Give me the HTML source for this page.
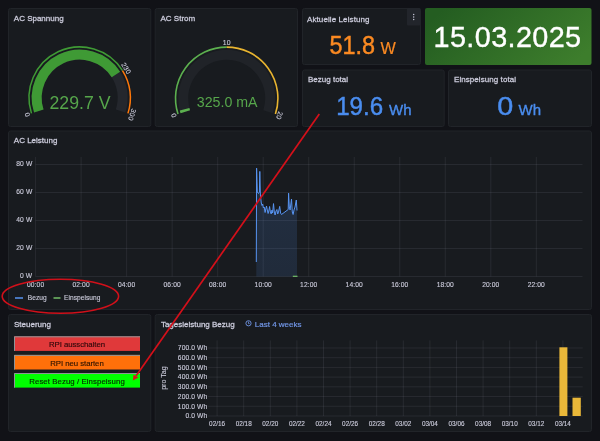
<!DOCTYPE html>
<html><head><meta charset="utf-8"><style>
html,body{margin:0;padding:0;background:#111217;width:600px;height:441px;overflow:hidden}
svg{display:block;font-family:"Liberation Sans", sans-serif;will-change:transform}
</style></head><body>
<svg width="600" height="441" viewBox="0 0 600 441">
<rect x="8.5" y="8.5" width="142.3" height="118" rx="2" fill="#181b1f" stroke="#212429" stroke-width="1"/>
<rect x="155.2" y="8.5" width="142.3" height="118" rx="2" fill="#181b1f" stroke="#212429" stroke-width="1"/>
<rect x="302.5" y="8.5" width="118" height="56" rx="2" fill="#181b1f" stroke="#212429" stroke-width="1"/>
<rect x="302.5" y="70.0" width="141.7" height="56.5" rx="2" fill="#181b1f" stroke="#212429" stroke-width="1"/>
<rect x="448.5" y="70.0" width="143" height="56.5" rx="2" fill="#181b1f" stroke="#212429" stroke-width="1"/>
<rect x="8.5" y="131.0" width="583" height="178.5" rx="2" fill="#181b1f" stroke="#212429" stroke-width="1"/>
<rect x="8.5" y="314.5" width="142.3" height="117" rx="2" fill="#181b1f" stroke="#212429" stroke-width="1"/>
<rect x="155.2" y="314.5" width="436.3" height="117" rx="2" fill="#181b1f" stroke="#212429" stroke-width="1"/>
<defs><linearGradient id="gg" x1="0" y1="0.3" x2="1" y2="0.7"><stop offset="0" stop-color="#245d21"/><stop offset="1" stop-color="#3d7d2c"/></linearGradient><linearGradient id="bf" x1="0" y1="0" x2="0" y2="1"><stop offset="0" stop-color="#5794F2" stop-opacity="0.17"/><stop offset="1" stop-color="#5794F2" stop-opacity="0.13"/></linearGradient></defs>
<rect x="425" y="8" width="166.5" height="57" rx="2" fill="url(#gg)"/>
<text x="13.8" y="21" font-size="8" fill="#ccccdc" text-anchor="start" stroke="#ccccdc" stroke-width="0.28">AC Spannung</text>
<text x="160.5" y="21" font-size="8" fill="#ccccdc" text-anchor="start" stroke="#ccccdc" stroke-width="0.28">AC Strom</text>
<text x="307" y="21.5" font-size="8" fill="#ccccdc" text-anchor="start" stroke="#ccccdc" stroke-width="0.28" textLength="62.5" lengthAdjust="spacing">Aktuelle Leistung</text>
<text x="308" y="82" font-size="8" fill="#ccccdc" text-anchor="start" stroke="#ccccdc" stroke-width="0.28">Bezug total</text>
<text x="454" y="82" font-size="8" fill="#ccccdc" text-anchor="start" stroke="#ccccdc" stroke-width="0.28" textLength="62" lengthAdjust="spacing">Einspeisung total</text>
<text x="13.8" y="143.3" font-size="8" fill="#ccccdc" text-anchor="start" stroke="#ccccdc" stroke-width="0.28">AC Leistung</text>
<text x="14" y="326.5" font-size="8" fill="#ccccdc" text-anchor="start" stroke="#ccccdc" stroke-width="0.28">Steuerung</text>
<text x="160.9" y="326.8" font-size="8" fill="#ccccdc" text-anchor="start" stroke="#ccccdc" stroke-width="0.28">Tagesleistung Bezug</text>
<rect x="407" y="8" width="13.5" height="17.5" rx="1" fill="#22252b"/>
<circle cx="413.7" cy="14.5" r="0.7" fill="#ccccdc"/>
<circle cx="413.7" cy="17" r="0.7" fill="#ccccdc"/>
<circle cx="413.7" cy="19.5" r="0.7" fill="#ccccdc"/>
<text x="329.4" y="54.4" font-size="25" fill="#FB8A22" text-anchor="start" textLength="45.6" lengthAdjust="spacingAndGlyphs" stroke="#FB8A22" stroke-width="0.45">51.8</text>
<text x="380.6" y="54.4" font-size="16.2" fill="#FB8A22" text-anchor="start" stroke="#FB8A22" stroke-width="0.2">W</text>
<text x="433.6" y="47.1" font-size="28.8" fill="#ffffff" text-anchor="start" textLength="147.5" lengthAdjust="spacing" stroke="#ffffff" stroke-width="0.35">15.03.2025</text>
<text x="336.2" y="115.4" font-size="25" fill="#4A8DEF" text-anchor="start" stroke="#4A8DEF" stroke-width="0.45" textLength="47" lengthAdjust="spacingAndGlyphs">19.6</text>
<text x="389" y="115.4" font-size="15" fill="#4A8DEF" text-anchor="start" stroke="#4A8DEF" stroke-width="0.35">Wh</text>
<text x="497.3" y="115" font-size="25" fill="#4A8DEF" text-anchor="start" textLength="16" lengthAdjust="spacingAndGlyphs" stroke="#4A8DEF" stroke-width="0.45">0</text>
<text x="518.5" y="115" font-size="15" fill="#4A8DEF" text-anchor="start" stroke="#4A8DEF" stroke-width="0.35">Wh</text>
<path d="M38.80,110.99 A43,43 0 1 1 120.60,110.99" fill="none" stroke="#24272d" stroke-width="10" stroke-linecap="butt"/>
<path d="M38.80,110.99 A43,43 0 0 1 115.92,74.52" fill="none" stroke="#3f9a35" stroke-width="10" stroke-linecap="butt"/>
<path d="M31.48,113.37 A50.7,50.7 0 0 1 122.51,70.53" fill="none" stroke="#3f9a35" stroke-width="1.5" stroke-linecap="butt"/>
<path d="M122.51,70.53 A50.7,50.7 0 0 1 127.92,113.37" fill="none" stroke="#FF780A" stroke-width="1.5" stroke-linecap="butt"/>
<text x="0" y="2.4" font-size="6.9" fill="#ccccdc" letter-spacing="0.15" stroke="#ccccdc" stroke-width="0.1" text-anchor="middle" transform="translate(27.30,114.73) rotate(252.0)">0</text>
<text x="0" y="2.4" font-size="6.9" fill="#ccccdc" letter-spacing="0.15" stroke="#ccccdc" stroke-width="0.1" text-anchor="middle" transform="translate(126.22,68.18) rotate(417.6)">230</text>
<text x="0" y="2.4" font-size="6.9" fill="#ccccdc" letter-spacing="0.15" stroke="#ccccdc" stroke-width="0.1" text-anchor="middle" transform="translate(132.10,114.73) rotate(468.0)">300</text>
<text x="80" y="109.4" font-size="17.7" fill="#56A64B" text-anchor="middle" >229.7 V</text>
<path d="M185.33,111.74 A43.5,43.5 0 1 1 268.07,111.74" fill="none" stroke="#202328" stroke-width="10" stroke-linecap="butt"/>
<path d="M185.33,111.74 A43.5,43.5 0 0 1 184.58,109.18" fill="none" stroke="#5cb04f" stroke-width="10" stroke-linecap="butt"/>
<path d="M178.01,114.12 A51.2,51.2 0 0 1 226.70,47.10" fill="none" stroke="#5cb04f" stroke-width="1.6" stroke-linecap="butt"/>
<path d="M226.70,47.10 A51.2,51.2 0 0 1 275.39,114.12" fill="none" stroke="#E8B430" stroke-width="1.6" stroke-linecap="butt"/>
<text x="0" y="2.4" font-size="6.9" fill="#ccccdc" letter-spacing="0.15" stroke="#ccccdc" stroke-width="0.1" text-anchor="middle" transform="translate(173.82,115.48) rotate(252.0)">0</text>
<text x="0" y="2.4" font-size="6.9" fill="#ccccdc" letter-spacing="0.15" stroke="#ccccdc" stroke-width="0.1" text-anchor="middle" transform="translate(226.70,42.70) rotate(360.0)">10</text>
<text x="0" y="2.4" font-size="6.9" fill="#ccccdc" letter-spacing="0.15" stroke="#ccccdc" stroke-width="0.1" text-anchor="middle" transform="translate(279.58,115.48) rotate(468.0)">20</text>
<text x="227.2" y="106.9" font-size="14.2" fill="#56A64B" text-anchor="middle" >325.0 mA</text>
<line x1="35.5" y1="164.5" x2="582.5" y2="164.5" stroke="#ccccdc" stroke-opacity="0.09" stroke-width="1"/>
<text x="32.3" y="166.4" font-size="6.7" fill="#ccccdc" text-anchor="end" letter-spacing="0.1" stroke="#ccccdc" stroke-width="0.12">80 W</text>
<line x1="35.5" y1="192.5" x2="582.5" y2="192.5" stroke="#ccccdc" stroke-opacity="0.09" stroke-width="1"/>
<text x="32.3" y="194.4" font-size="6.7" fill="#ccccdc" text-anchor="end" letter-spacing="0.1" stroke="#ccccdc" stroke-width="0.12">60 W</text>
<line x1="35.5" y1="220.5" x2="582.5" y2="220.5" stroke="#ccccdc" stroke-opacity="0.09" stroke-width="1"/>
<text x="32.3" y="222.4" font-size="6.7" fill="#ccccdc" text-anchor="end" letter-spacing="0.1" stroke="#ccccdc" stroke-width="0.12">40 W</text>
<line x1="35.5" y1="248.5" x2="582.5" y2="248.5" stroke="#ccccdc" stroke-opacity="0.09" stroke-width="1"/>
<text x="32.3" y="250.4" font-size="6.7" fill="#ccccdc" text-anchor="end" letter-spacing="0.1" stroke="#ccccdc" stroke-width="0.12">20 W</text>
<line x1="35.5" y1="276.5" x2="582.5" y2="276.5" stroke="#ccccdc" stroke-opacity="0.09" stroke-width="1"/>
<text x="32.3" y="278.4" font-size="6.7" fill="#ccccdc" text-anchor="end" letter-spacing="0.1" stroke="#ccccdc" stroke-width="0.12">0 W</text>
<line x1="35.60" y1="157" x2="35.60" y2="276.5" stroke="#ccccdc" stroke-opacity="0.09" stroke-width="1"/>
<text x="35.60" y="286.8" font-size="6.7" fill="#ccccdc" text-anchor="middle" letter-spacing="0.1" stroke="#ccccdc" stroke-width="0.12">00:00</text>
<line x1="81.12" y1="157" x2="81.12" y2="276.5" stroke="#ccccdc" stroke-opacity="0.09" stroke-width="1"/>
<text x="81.12" y="286.8" font-size="6.7" fill="#ccccdc" text-anchor="middle" letter-spacing="0.1" stroke="#ccccdc" stroke-width="0.12">02:00</text>
<line x1="126.64" y1="157" x2="126.64" y2="276.5" stroke="#ccccdc" stroke-opacity="0.09" stroke-width="1"/>
<text x="126.64" y="286.8" font-size="6.7" fill="#ccccdc" text-anchor="middle" letter-spacing="0.1" stroke="#ccccdc" stroke-width="0.12">04:00</text>
<line x1="172.16" y1="157" x2="172.16" y2="276.5" stroke="#ccccdc" stroke-opacity="0.09" stroke-width="1"/>
<text x="172.16" y="286.8" font-size="6.7" fill="#ccccdc" text-anchor="middle" letter-spacing="0.1" stroke="#ccccdc" stroke-width="0.12">06:00</text>
<line x1="217.68" y1="157" x2="217.68" y2="276.5" stroke="#ccccdc" stroke-opacity="0.09" stroke-width="1"/>
<text x="217.68" y="286.8" font-size="6.7" fill="#ccccdc" text-anchor="middle" letter-spacing="0.1" stroke="#ccccdc" stroke-width="0.12">08:00</text>
<line x1="263.20" y1="157" x2="263.20" y2="276.5" stroke="#ccccdc" stroke-opacity="0.09" stroke-width="1"/>
<text x="263.20" y="286.8" font-size="6.7" fill="#ccccdc" text-anchor="middle" letter-spacing="0.1" stroke="#ccccdc" stroke-width="0.12">10:00</text>
<line x1="308.72" y1="157" x2="308.72" y2="276.5" stroke="#ccccdc" stroke-opacity="0.09" stroke-width="1"/>
<text x="308.72" y="286.8" font-size="6.7" fill="#ccccdc" text-anchor="middle" letter-spacing="0.1" stroke="#ccccdc" stroke-width="0.12">12:00</text>
<line x1="354.24" y1="157" x2="354.24" y2="276.5" stroke="#ccccdc" stroke-opacity="0.09" stroke-width="1"/>
<text x="354.24" y="286.8" font-size="6.7" fill="#ccccdc" text-anchor="middle" letter-spacing="0.1" stroke="#ccccdc" stroke-width="0.12">14:00</text>
<line x1="399.76" y1="157" x2="399.76" y2="276.5" stroke="#ccccdc" stroke-opacity="0.09" stroke-width="1"/>
<text x="399.76" y="286.8" font-size="6.7" fill="#ccccdc" text-anchor="middle" letter-spacing="0.1" stroke="#ccccdc" stroke-width="0.12">16:00</text>
<line x1="445.28" y1="157" x2="445.28" y2="276.5" stroke="#ccccdc" stroke-opacity="0.09" stroke-width="1"/>
<text x="445.28" y="286.8" font-size="6.7" fill="#ccccdc" text-anchor="middle" letter-spacing="0.1" stroke="#ccccdc" stroke-width="0.12">18:00</text>
<line x1="490.80" y1="157" x2="490.80" y2="276.5" stroke="#ccccdc" stroke-opacity="0.09" stroke-width="1"/>
<text x="490.80" y="286.8" font-size="6.7" fill="#ccccdc" text-anchor="middle" letter-spacing="0.1" stroke="#ccccdc" stroke-width="0.12">20:00</text>
<line x1="536.32" y1="157" x2="536.32" y2="276.5" stroke="#ccccdc" stroke-opacity="0.09" stroke-width="1"/>
<text x="536.32" y="286.8" font-size="6.7" fill="#ccccdc" text-anchor="middle" letter-spacing="0.1" stroke="#ccccdc" stroke-width="0.12">22:00</text>
<polygon points="256.3,276.5 256.3,262 256.6,168.2 257.3,192 258.5,193.5 259.4,192 259.8,171.4 260.4,195 261.3,203 262,205.5 262.7,204 263.4,208 264.2,207 265.1,212.5 265.8,209 266.5,206 267.3,210 268.1,213.5 268.8,211 269.6,206.5 270.4,212 271.2,214 272,210 272.6,213 273.5,203.6 274.3,212 275.1,215 276,211 276.9,209.5 277.7,214 278.5,212 279.7,206.4 280.6,213 281.5,214.5 288.2,209.5 288.6,193.2 289.3,207 290.1,210 291.5,199 292.3,212 293.1,214.5 294,210 295,207 296.3,200 297,210.5 297,276.5" fill="url(#bf)"/>
<polyline points="256.3,262 256.6,168.2 257.3,192 258.5,193.5 259.4,192 259.8,171.4 260.4,195 261.3,203 262,205.5 262.7,204 263.4,208 264.2,207 265.1,212.5 265.8,209 266.5,206 267.3,210 268.1,213.5 268.8,211 269.6,206.5 270.4,212 271.2,214 272,210 272.6,213 273.5,203.6 274.3,212 275.1,215 276,211 276.9,209.5 277.7,214 278.5,212 279.7,206.4 280.6,213 281.5,214.5 288.2,209.5 288.6,193.2 289.3,207 290.1,210 291.5,199 292.3,212 293.1,214.5 294,210 295,207 296.3,200 297,210.5" fill="none" stroke="#5794F2" stroke-width="1" stroke-linejoin="miter" stroke-miterlimit="2"/>
<line x1="292.8" y1="276.3" x2="297.5" y2="276.3" stroke="#73BF69" stroke-width="1.2"/>
<line x1="15" y1="298" x2="23" y2="298" stroke="#5794F2" stroke-width="1.5"/>
<text x="27.8" y="299.8" font-size="6.6" fill="#ccccdc" text-anchor="start" letter-spacing="0.05" stroke="#ccccdc" stroke-width="0.12">Bezug</text>
<line x1="53.5" y1="298" x2="60.5" y2="298" stroke="#73BF69" stroke-width="1.5"/>
<text x="64" y="299.8" font-size="6.6" fill="#ccccdc" text-anchor="start" letter-spacing="0.05" stroke="#ccccdc" stroke-width="0.12">Einspeisung</text>
<rect x="14" y="336.3" width="126" height="14.6" fill="#E0393A"/>
<path d="M14.5,350.90000000000003 V336.8 H140" fill="none" stroke="#8f9497" stroke-width="1"/>
<text x="77" y="347.2" font-size="7.8" fill="#2e080b" text-anchor="middle" stroke="#2e080b" stroke-width="0.15" textLength="56" lengthAdjust="spacing">RPI ausschalten</text>
<rect x="14" y="354.9" width="126" height="14.6" fill="#FF700A"/>
<path d="M14.5,369.5 V355.4 H140" fill="none" stroke="#8f9497" stroke-width="1"/>
<text x="77" y="365.79999999999995" font-size="7.8" fill="#301400" text-anchor="middle" stroke="#301400" stroke-width="0.15" textLength="53.5" lengthAdjust="spacing">RPI neu starten</text>
<rect x="14" y="373.0" width="126" height="14.6" fill="#00FF00"/>
<path d="M14.5,387.6 V373.5 H140" fill="none" stroke="#8f9497" stroke-width="1"/>
<text x="77" y="383.9" font-size="7.8" fill="#042a04" text-anchor="middle" stroke="#042a04" stroke-width="0.15" textLength="95.5" lengthAdjust="spacing">Reset Bezug / Einspeisung</text>
<text x="254.8" y="326.5" font-size="8" fill="#7196e6" text-anchor="start" stroke="#7196e6" stroke-width="0.2">Last 4 weeks</text>
<circle cx="248.5" cy="323.3" r="2.6" fill="none" stroke="#7196e6" stroke-width="0.9"/><path d="M248.5,321.6 V323.6 H249.6" fill="none" stroke="#7196e6" stroke-width="0.8"/>
<line x1="208" y1="416.00" x2="582.7" y2="416.00" stroke="#ccccdc" stroke-opacity="0.09" stroke-width="1"/>
<text x="207.3" y="418.30" font-size="6.7" fill="#ccccdc" text-anchor="end" letter-spacing="0.1" stroke="#ccccdc" stroke-width="0.12">0.0 Wh</text>
<line x1="208" y1="406.28" x2="582.7" y2="406.28" stroke="#ccccdc" stroke-opacity="0.09" stroke-width="1"/>
<text x="207.3" y="408.58" font-size="6.7" fill="#ccccdc" text-anchor="end" letter-spacing="0.1" stroke="#ccccdc" stroke-width="0.12">100.0 Wh</text>
<line x1="208" y1="396.56" x2="582.7" y2="396.56" stroke="#ccccdc" stroke-opacity="0.09" stroke-width="1"/>
<text x="207.3" y="398.86" font-size="6.7" fill="#ccccdc" text-anchor="end" letter-spacing="0.1" stroke="#ccccdc" stroke-width="0.12">200.0 Wh</text>
<line x1="208" y1="386.84" x2="582.7" y2="386.84" stroke="#ccccdc" stroke-opacity="0.09" stroke-width="1"/>
<text x="207.3" y="389.14" font-size="6.7" fill="#ccccdc" text-anchor="end" letter-spacing="0.1" stroke="#ccccdc" stroke-width="0.12">300.0 Wh</text>
<line x1="208" y1="377.12" x2="582.7" y2="377.12" stroke="#ccccdc" stroke-opacity="0.09" stroke-width="1"/>
<text x="207.3" y="379.42" font-size="6.7" fill="#ccccdc" text-anchor="end" letter-spacing="0.1" stroke="#ccccdc" stroke-width="0.12">400.0 Wh</text>
<line x1="208" y1="367.40" x2="582.7" y2="367.40" stroke="#ccccdc" stroke-opacity="0.09" stroke-width="1"/>
<text x="207.3" y="369.70" font-size="6.7" fill="#ccccdc" text-anchor="end" letter-spacing="0.1" stroke="#ccccdc" stroke-width="0.12">500.0 Wh</text>
<line x1="208" y1="357.68" x2="582.7" y2="357.68" stroke="#ccccdc" stroke-opacity="0.09" stroke-width="1"/>
<text x="207.3" y="359.98" font-size="6.7" fill="#ccccdc" text-anchor="end" letter-spacing="0.1" stroke="#ccccdc" stroke-width="0.12">600.0 Wh</text>
<line x1="208" y1="347.96" x2="582.7" y2="347.96" stroke="#ccccdc" stroke-opacity="0.09" stroke-width="1"/>
<text x="207.3" y="350.26" font-size="6.7" fill="#ccccdc" text-anchor="end" letter-spacing="0.1" stroke="#ccccdc" stroke-width="0.12">700.0 Wh</text>
<line x1="217.10" y1="340.4" x2="217.10" y2="416" stroke="#ccccdc" stroke-opacity="0.09" stroke-width="1"/>
<text x="217.10" y="426" font-size="6.4" fill="#ccccdc" text-anchor="middle" letter-spacing="0" stroke="#ccccdc" stroke-width="0.12">02/16</text>
<line x1="243.70" y1="340.4" x2="243.70" y2="416" stroke="#ccccdc" stroke-opacity="0.09" stroke-width="1"/>
<text x="243.70" y="426" font-size="6.4" fill="#ccccdc" text-anchor="middle" letter-spacing="0" stroke="#ccccdc" stroke-width="0.12">02/18</text>
<line x1="270.30" y1="340.4" x2="270.30" y2="416" stroke="#ccccdc" stroke-opacity="0.09" stroke-width="1"/>
<text x="270.30" y="426" font-size="6.4" fill="#ccccdc" text-anchor="middle" letter-spacing="0" stroke="#ccccdc" stroke-width="0.12">02/20</text>
<line x1="296.90" y1="340.4" x2="296.90" y2="416" stroke="#ccccdc" stroke-opacity="0.09" stroke-width="1"/>
<text x="296.90" y="426" font-size="6.4" fill="#ccccdc" text-anchor="middle" letter-spacing="0" stroke="#ccccdc" stroke-width="0.12">02/22</text>
<line x1="323.50" y1="340.4" x2="323.50" y2="416" stroke="#ccccdc" stroke-opacity="0.09" stroke-width="1"/>
<text x="323.50" y="426" font-size="6.4" fill="#ccccdc" text-anchor="middle" letter-spacing="0" stroke="#ccccdc" stroke-width="0.12">02/24</text>
<line x1="350.10" y1="340.4" x2="350.10" y2="416" stroke="#ccccdc" stroke-opacity="0.09" stroke-width="1"/>
<text x="350.10" y="426" font-size="6.4" fill="#ccccdc" text-anchor="middle" letter-spacing="0" stroke="#ccccdc" stroke-width="0.12">02/26</text>
<line x1="376.70" y1="340.4" x2="376.70" y2="416" stroke="#ccccdc" stroke-opacity="0.09" stroke-width="1"/>
<text x="376.70" y="426" font-size="6.4" fill="#ccccdc" text-anchor="middle" letter-spacing="0" stroke="#ccccdc" stroke-width="0.12">02/28</text>
<line x1="403.30" y1="340.4" x2="403.30" y2="416" stroke="#ccccdc" stroke-opacity="0.09" stroke-width="1"/>
<text x="403.30" y="426" font-size="6.4" fill="#ccccdc" text-anchor="middle" letter-spacing="0" stroke="#ccccdc" stroke-width="0.12">03/02</text>
<line x1="429.90" y1="340.4" x2="429.90" y2="416" stroke="#ccccdc" stroke-opacity="0.09" stroke-width="1"/>
<text x="429.90" y="426" font-size="6.4" fill="#ccccdc" text-anchor="middle" letter-spacing="0" stroke="#ccccdc" stroke-width="0.12">03/04</text>
<line x1="456.50" y1="340.4" x2="456.50" y2="416" stroke="#ccccdc" stroke-opacity="0.09" stroke-width="1"/>
<text x="456.50" y="426" font-size="6.4" fill="#ccccdc" text-anchor="middle" letter-spacing="0" stroke="#ccccdc" stroke-width="0.12">03/06</text>
<line x1="483.10" y1="340.4" x2="483.10" y2="416" stroke="#ccccdc" stroke-opacity="0.09" stroke-width="1"/>
<text x="483.10" y="426" font-size="6.4" fill="#ccccdc" text-anchor="middle" letter-spacing="0" stroke="#ccccdc" stroke-width="0.12">03/08</text>
<line x1="509.70" y1="340.4" x2="509.70" y2="416" stroke="#ccccdc" stroke-opacity="0.09" stroke-width="1"/>
<text x="509.70" y="426" font-size="6.4" fill="#ccccdc" text-anchor="middle" letter-spacing="0" stroke="#ccccdc" stroke-width="0.12">03/10</text>
<line x1="536.30" y1="340.4" x2="536.30" y2="416" stroke="#ccccdc" stroke-opacity="0.09" stroke-width="1"/>
<text x="536.30" y="426" font-size="6.4" fill="#ccccdc" text-anchor="middle" letter-spacing="0" stroke="#ccccdc" stroke-width="0.12">03/12</text>
<line x1="562.90" y1="340.4" x2="562.90" y2="416" stroke="#ccccdc" stroke-opacity="0.09" stroke-width="1"/>
<text x="562.90" y="426" font-size="6.4" fill="#ccccdc" text-anchor="middle" letter-spacing="0" stroke="#ccccdc" stroke-width="0.12">03/14</text>
<text x="0" y="0" font-size="7.2" fill="#ccccdc" stroke="#ccccdc" stroke-width="0.1" text-anchor="middle" transform="translate(165.6,378.1) rotate(-90)" textLength="23.5" lengthAdjust="spacing">pro Tag</text>
<rect x="559.4" y="347.3" width="8" height="68.7" fill="#EAB839"/>
<rect x="572.5" y="397.7" width="8.3" height="18.3" fill="#EAB839"/>
<ellipse cx="60.4" cy="296.2" rx="58.2" ry="17.0" fill="none" stroke="#d0101a" stroke-width="1.6"/>
<line x1="319.3" y1="114" x2="136" y2="376" stroke="#d4101a" stroke-width="1.7"/>
<polygon points="132.9,380.4 133.5,374.8 138.5,377.6" fill="#e0101a"/>
</svg></body></html>
